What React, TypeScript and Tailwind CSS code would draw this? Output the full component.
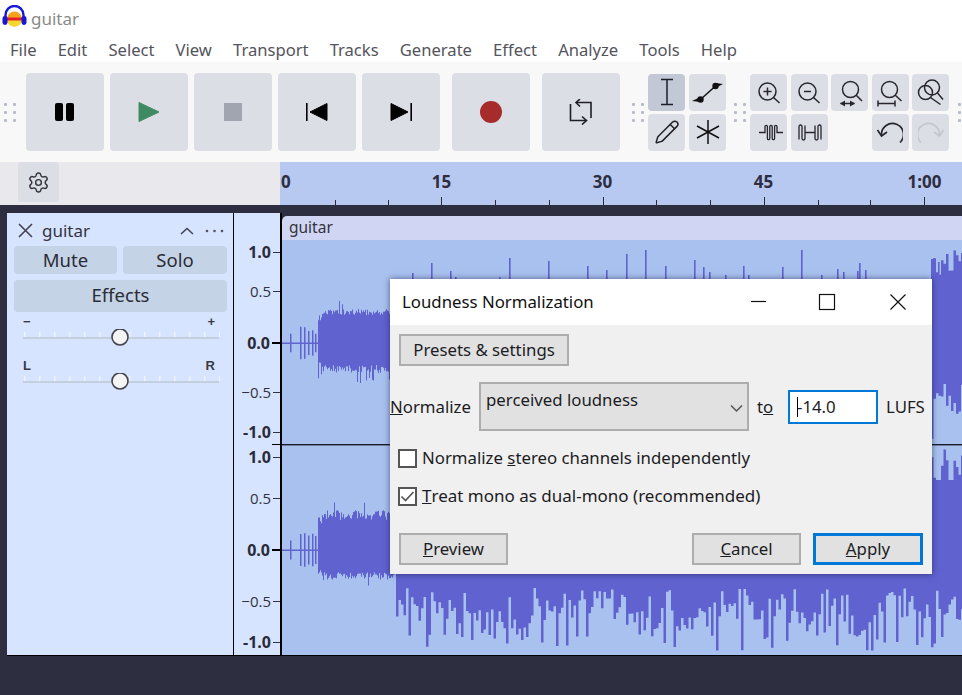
import { Pencil, Settings } from "lucide-react";

const ui = "font-['Noto_Sans',sans-serif]";

// spikes above the dialog, read off the reference: [x, top] in page pixels
const topSpikes = [
  [397, 282], [407, 282], [412, 273], [431, 263], [436, 286], [450, 271], [455, 277], [470, 285],
  [479, 293], [484, 288], [489, 285], [499, 277], [504, 288], [509, 258], [518, 288], [529, 285],
  [548, 261], [563, 286], [567, 280], [577, 284], [587, 266], [593, 290], [606, 270], [626, 254],
  [645, 250], [650, 280], [665, 266], [682, 290], [689, 284], [694, 260], [703, 267], [709, 272],
  [725, 275], [743, 266], [748, 275], [763, 285], [782, 267], [787, 288], [801, 250], [805, 290],
  [821, 275], [837, 269], [843, 272], [857, 271], [859, 263], [865, 270], [880, 290], [890, 290],
  [903, 287], [918, 292], [933, 258], [938, 262], [943, 270], [947, 266], [951, 275], [956, 260], [961, 270],
];

function rng(seed: number) {
  let s = seed;
  return () => {
    s = (s * 16807) % 2147483647;
    return s / 2147483647;
  };
}

function buildWave() {
  const cy = [103, 310];
  let d = "";
  cy.forEach((c, ch) => {
    const r = rng(ch === 0 ? 4211 : 9137);
    // quiet lead-in
    d += `M0 ${c - 0.5}h36v1.5h-36z`;
    for (const sx of [8, 18, 22, 26, 30, 33]) {
      const a = 9 + r() * 8;
      d += `M${sx} ${c - a}h1.5v${a * 2}h-1.5z`;
    }
    for (let x = 36; x < 114; x++) {
      const up = (ch === 0 ? 28 + r() * 6 : 30 + r() * 10) + (r() > 0.9 ? 8 : 0) - (x < 40 ? 6 : 0);
      const down = 22 + r() * 8 + (r() > 0.93 ? 13 : 0) - (x < 40 ? 4 : 0);
      d += `M${x} ${c - up}h1v${up + down}h-1z`;
    }
    for (let x = 114; x < 680; x += 2.5) {
      const swell = 9 * Math.sin(x / 27) + 5 * Math.sin(x / 9);
      const up = x > 648 ? 62 + r() * 34 : 58 + r() * 5;
      let down = 64 + swell + (r() - 0.5) * 26;
      const roll = r();
      if (roll > 0.82) down = 84 + r() * 17;
      else if (roll < 0.12) down = 38 + r() * 12;
      const u = ch === 1 ? Math.max(up + 6, 70) : up;
      d += `M${x} ${c - u}h2.5v${u + down}h-2.5z`;
    }
  });
  for (const [x, top] of topSpikes) {
    d += `M${x - 282} ${top - 240}h1.6v60h-1.6z`;
  }
  return d;
}

const waveD = buildWave();

function Grip({ className = "" }: { className?: string }) {
  return (
    <div className={`grid grid-cols-2 gap-x-[6px] gap-y-[5px] shrink-0 ${className}`}>
      {[0, 1, 2, 3, 4, 5].map((i) => (
        <span key={i} className="w-[3px] h-[3px] bg-[#b8bcca] rounded-[1px]" />
      ))}
    </div>
  );
}

function BigBtn({ children, className = "" }: { children: React.ReactNode; className?: string }) {
  return (
    <div className={`w-[78px] h-[78px] rounded-[4px] bg-[#dcdee6] flex items-center justify-center shrink-0 ${className}`}>
      {children}
    </div>
  );
}

function SmallBtn({ children, active }: { children?: React.ReactNode; active?: boolean }) {
  return (
    <div className={`w-[37px] h-[37px] rounded-[4px] flex items-center justify-center ${active ? "bg-[#c3c8d6]" : "bg-[#dcdee6]"}`}>
      {children}
    </div>
  );
}

function ZoomIcon({ children }: { children?: React.ReactNode }) {
  return (
    <svg width="28" height="30" viewBox="0 0 28 30" fill="none" stroke="#26262c" strokeWidth="1.5">
      {children}
    </svg>
  );
}

function Slider({ left, right }: { left: string; right: string }) {
  const ticks = [0, 1, 2, 3, 4, 5, 6, 7, 8, 9, 10, 11, 12, 13];
  return (
    <div className="h-[44px]">
      <div className="flex justify-between pl-[9px] pr-[12px] h-[14px] text-[13px] leading-[14px] font-bold font-['Liberation_Sans',sans-serif] text-[#3a3a44]">
        <span>{left}</span>
        <span>{right}</span>
      </div>
      <svg width="197" height="18" viewBox="0 0 197 18" className="ml-[9px]">
        {ticks.map((t) => (
          <rect key={t} x={1 + t * 15} y="3" width="1.5" height="5" fill="#eef3fc" />
        ))}
        <rect x="0" y="8" width="196" height="2" fill="#c3cfdf" />
        <circle cx="97" cy="8" r="8" fill="#f4f4f4" stroke="#44444c" strokeWidth="1.6" />
      </svg>
    </div>
  );
}

function ScaleRow({ label, strong, className = "", long }: { label: string; strong?: boolean; long?: boolean; className?: string }) {
  return (
    <div className={`h-[20px] flex items-center justify-end ${className}`}>
      <span className={`${strong ? "font-bold text-[#2b2b38] text-[16px]" : "text-[#33333d] text-[15px]"} font-['Open_Sans',sans-serif] leading-none`}>
        {label}
      </span>
      <span className={`ml-[2px] ${long ? "w-[8px] h-[2px] bg-black" : "w-[7px] h-px bg-[#33333d]"}`} />
    </div>
  );
}

function DlgBtn({ children, className = "" }: { children: React.ReactNode; className?: string }) {
  return (
    <div className={`h-[32px] bg-[#e1e1e1] flex items-center justify-center text-[16.8px] leading-none text-[#1c1c24] ${className}`}>
      {children}
    </div>
  );
}

function Dialog() {
  return (
    <div className={`absolute left-[390px] top-[279px] w-[542px] h-[295px] bg-[#f0f0f0] shadow-[0_0_6px_rgba(20,20,60,0.6)] text-[16.8px] ${ui}`}>
      <div className="h-[46px] bg-white flex items-center pl-[12px]">
        <span className="text-[#111] flex-1">Loudness Normalization</span>
        <svg width="155" height="18" viewBox="0 0 155 18" className="mr-[26px]" fill="none" stroke="#111" strokeWidth="1.2">
          <path d="M0 8.5H15" />
          <rect x="68.5" y="1.5" width="15" height="15" />
          <path d="M139.5 1.5L154.5 16.5M154.5 1.5L139.5 16.5" />
        </svg>
      </div>
      <div className="pl-[9px] pt-[9px]">
        <DlgBtn className="w-[170px] border-2 border-[#adadad]">Presets &amp; settings</DlgBtn>
      </div>
      <div className="flex items-start mt-[16px] h-[49px]">
        <span className="leading-[49px] text-[#1c1c24] w-[89px]">
          <span className="underline">N</span>ormalize
        </span>
        <div className="w-[270px] h-[49px] bg-[#e1e1e1] border-2 border-[#adadad] flex justify-between pl-[5px] pr-[2px]">
          <span className="leading-[32px] h-[32px] text-[#1c1c24]">perceived loudness</span>
          <svg width="18" height="45" viewBox="0 0 18 45" fill="none" stroke="#555" strokeWidth="1.5">
            <path d="M4 21.5L9.5 27L15 21.5" />
          </svg>
        </div>
        <span className="leading-[49px] text-[#1c1c24] ml-[8px] w-[32px]">
          t<span className="underline">o</span>
        </span>
        <div className="w-[90px] h-[34px] mt-[8px] -ml-px bg-white border-2 border-[#0078d7] flex items-center pl-[7px] text-[#1c1c24] leading-none">
          <span className="w-px h-[20px] bg-black -mr-px" />
          -14.0
        </div>
        <span className="leading-[49px] text-[#1c1c24] ml-[8px]">LUFS</span>
      </div>
      <div className="flex items-center pl-[8px] mt-[17px] h-[20px] text-[#1c1c24]">
        <span className="w-[19px] h-[19px] bg-white border-2 border-[#555] mr-[5px]" />
        Normalize&nbsp;<span className="underline">s</span>tereo channels independently
      </div>
      <div className="flex items-center pl-[8px] mt-[18px] h-[20px] text-[17px] text-[#1c1c24]">
        <span className="w-[19px] h-[19px] bg-white border-2 border-[#555] mr-[5px] flex items-center justify-center">
          <svg width="15" height="15" viewBox="0 0 15 15" fill="none" stroke="#555" strokeWidth="1.7">
            <path d="M1.5 7.5L5.5 11.5L13.5 3" />
          </svg>
        </span>
        <span className="underline">T</span>reat mono as dual-mono (recommended)
      </div>
      <div className="flex pl-[9px] pr-[9px] mt-[27px]">
        <DlgBtn className="w-[109px] border-2 border-[#adadad]">
          <span className="underline">P</span>review
        </DlgBtn>
        <DlgBtn className="w-[109px] ml-auto border-2 border-[#adadad]">
          <span className="underline">C</span>ancel
        </DlgBtn>
        <DlgBtn className="w-[110px] ml-[12px] border-[3px] border-[#0078d7]">
          <span className="underline">A</span>pply
        </DlgBtn>
      </div>
    </div>
  );
}

export default function App() {
  return (
    <div className={`relative w-[962px] h-[695px] overflow-hidden bg-white flex flex-col ${ui}`}>
      {/* Title bar */}
      <div className="h-[38px] flex items-center pl-[2px] shrink-0">
        <svg width="25" height="22" viewBox="0 0 25 22" className="mb-[6px]">
          <circle cx="12.5" cy="14" r="7.5" fill="#f6a21c" />
          <path d="M5 14a7.5 7.5 0 0 0 15 0z" fill="#f7d82a" />
          <rect x="5" y="12.5" width="15" height="3" fill="#e3202a" />
          <path d="M3.5 14V10a9 9 0 0 1 18 0v4" fill="none" stroke="#1717d6" strokeWidth="2.4" />
          <rect x="0.5" y="11" width="5" height="9" rx="2.4" fill="#1717d6" />
          <rect x="19.5" y="11" width="5" height="9" rx="2.4" fill="#1717d6" />
        </svg>
        <span className="ml-[4px] text-[17px] text-[#8a8a8a] leading-none mb-[1px]">guitar</span>
      </div>

      {/* Menu */}
      <div className="h-[24px] flex items-center pl-[10px] gap-[21.1px] text-[16.6px] text-[#54545c] shrink-0 leading-none">
        {["File", "Edit", "Select", "View", "Transport", "Tracks", "Generate", "Effect", "Analyze", "Tools", "Help"].map((m) => (
          <span key={m}>{m}</span>
        ))}
      </div>

      {/* Toolbar */}
      <div className="h-[100px] shrink-0 bg-[#f8f8f9] flex items-center pl-[4px] overflow-hidden">
        <Grip className="mr-[10px]" />
        <div className="flex gap-[6px] shrink-0">
          <BigBtn>
            <svg width="20" height="18" viewBox="0 0 20 18">
              <rect x="0" y="0" width="8" height="18" rx="2" fill="#000" />
              <rect x="11" y="0" width="8" height="18" rx="2" fill="#000" />
            </svg>
          </BigBtn>
          <BigBtn>
            <svg width="22" height="22" viewBox="0 0 22 22">
              <path d="M1 1.5L21 11L1 20.5z" fill="#3f8a63" stroke="#3f8a63" strokeLinejoin="round" />
            </svg>
          </BigBtn>
          <BigBtn>
            <div className="w-[18px] h-[18px] bg-[#a1a5b0]" />
          </BigBtn>
          <BigBtn>
            <svg width="22" height="18" viewBox="0 0 22 18">
              <rect x="0" y="0" width="1.6" height="18" fill="#000" />
              <path d="M4 9L21 0.5V17.5z" fill="#000" stroke="#000" strokeLinejoin="round" />
            </svg>
          </BigBtn>
          <BigBtn>
            <svg width="22" height="18" viewBox="0 0 22 18">
              <rect x="20.4" y="0" width="1.6" height="18" fill="#000" />
              <path d="M18 9L1 0.5V17.5z" fill="#000" stroke="#000" strokeLinejoin="round" />
            </svg>
          </BigBtn>
        </div>
        <BigBtn className="ml-[12px]">
          <div className="w-[22px] h-[22px] rounded-full bg-[#a62c2c]" />
        </BigBtn>
        <BigBtn className="ml-[12px]">
          <svg width="24" height="26" viewBox="0 0 24 26" fill="none" stroke="#1f1f26" strokeWidth="1.6">
            <path d="M1.5 5V21.5H17M22 19V3.5H7" />
            <path d="M13 17.5L17.5 21.5L13 25.5M11 0L7 3.5L11 7.5" />
          </svg>
        </BigBtn>

        <Grip className="ml-[12px] mr-[4px]" />
        <div className="grid grid-cols-[37px_37px] gap-x-[4px] gap-y-[3px] shrink-0">
          <SmallBtn active>
            <svg width="16" height="28" viewBox="0 0 16 28" fill="none" stroke="#1e1e24" strokeWidth="1.5">
              <path d="M2 1.5H14M2 26.5H14M8 1.5V26.5" />
            </svg>
          </SmallBtn>
          <SmallBtn>
            <svg width="34" height="26" viewBox="0 0 34 26" fill="#111">
              <path d="M9.5 20.5L24.5 7" fill="none" stroke="#111" strokeWidth="1.5" />
              <circle cx="9.5" cy="20.5" r="3.2" />
              <circle cx="24.5" cy="7" r="3.2" />
              <path d="M1 22L9.5 18V23zM32 5L24.5 4V9z" />
            </svg>
          </SmallBtn>
          <SmallBtn>
            <Pencil size={26} strokeWidth={1.4} color="#222228" />
          </SmallBtn>
          <SmallBtn>
            <svg width="26" height="26" viewBox="0 0 26 26" stroke="#111" strokeWidth="1.5">
              <path d="M13 1V25M2 7L24 19M2 19L24 7" />
            </svg>
          </SmallBtn>
        </div>

        <Grip className="ml-[8px] mr-[4px]" />
        <div className="grid grid-cols-[37px_37px_37px_37px_37px] gap-x-[3.5px] gap-y-[3px] shrink-0">
          <SmallBtn>
            <ZoomIcon>
              <circle cx="12.5" cy="14.5" r="8.5" />
              <path d="M18.5 20.5L24.5 26M8.5 14.5H16.5M12.5 10.5V18.5" />
            </ZoomIcon>
          </SmallBtn>
          <SmallBtn>
            <ZoomIcon>
              <circle cx="12.5" cy="14.5" r="8.5" />
              <path d="M18.5 20.5L24.5 26M9 14.5H16" />
            </ZoomIcon>
          </SmallBtn>
          <SmallBtn>
            <ZoomIcon>
              <circle cx="14.5" cy="12.5" r="8" />
              <path d="M20 18L26 24M4.5 26.5H18.5" />
              <path d="M4 26.5L9 23.5V29.5zM19 26.5L14 23.5V29.5z" fill="#26262c" stroke="none" />
            </ZoomIcon>
          </SmallBtn>
          <SmallBtn>
            <ZoomIcon>
              <circle cx="13.5" cy="12.5" r="8" />
              <path d="M19 18L25.5 24M2 26.5H19M2 23.5V29.5M19 23.5V29.5" />
            </ZoomIcon>
          </SmallBtn>
          <SmallBtn>
            <ZoomIcon>
              <circle cx="15" cy="10.5" r="7.5" />
              <circle cx="8.5" cy="15.5" r="7" />
              <path d="M20.5 16L26 22.5M13.5 20.5L23.5 27.5" />
            </ZoomIcon>
          </SmallBtn>
          <SmallBtn>
            <svg width="24" height="17" viewBox="0 0 24 17" fill="none" stroke="#26262c" strokeWidth="1.3" className="ml-[4px]">
              <path d="M0 8.5H6V2.5a1.2 1.2 0 0 1 2.4 0V14.5a1.2 1.2 0 0 0 2.4 0V2.5a1.2 1.2 0 0 1 2.4 0V14.5a1.2 1.2 0 0 0 2.4 0V2.5a1.2 1.2 0 0 1 2.4 0V8.5H24" />
            </svg>
          </SmallBtn>
          <SmallBtn>
            <svg width="24" height="17" viewBox="0 0 24 17" fill="none" stroke="#26262c" strokeWidth="1.3" className="ml-[2px]">
              <path d="M1 15.5V2.5a1.5 1.5 0 0 1 3 0V14.5a1.5 1.5 0 0 0 3 0V1.5M7 8.5H17M17 1.5V14.5a1.5 1.5 0 0 0 3 0V2.5a1.5 1.5 0 0 1 3 0V15.5" />
            </svg>
          </SmallBtn>
          <div />
          <SmallBtn>
            <svg width="26" height="26" viewBox="0 0 26 26" fill="none" stroke="#26262c" strokeWidth="1.7">
              <path d="M4.5 16A11 11 0 1 1 23 23.5" />
              <path d="M0.5 11L4.5 17L10 13" />
            </svg>
          </SmallBtn>
          <SmallBtn>
            <svg width="26" height="26" viewBox="0 0 26 26" fill="none" stroke="#c3c6ce" strokeWidth="1.7">
              <path d="M21.5 16A11 11 0 1 0 3 23.5" />
              <path d="M25.5 11L21.5 17L16 13" />
            </svg>
          </SmallBtn>
        </div>
        <Grip className="ml-[9px]" />
      </div>

      {/* Timeline ruler */}
      <div className="h-[43px] shrink-0 flex">
        <div className="w-[280px] bg-[#e9e9ed] pl-[18px] shrink-0">
          <div className="w-[41px] h-[40px] rounded-[4px] bg-[#dcdee6] flex items-center justify-center">
            <Settings size={23} strokeWidth={1.5} color="#34343c" />
          </div>
        </div>
        <div className="relative flex-1 bg-[#b7c9f0] overflow-hidden">
          <div className="flex h-[38px] items-center text-[17px] font-bold text-[#2e2e40] font-['Open_Sans',sans-serif] leading-none">
            <span className="w-[81px] shrink-0 pl-px">0</span>
            {["15", "30", "45", "1:00"].map((l) => (
              <span key={l} className="w-[161px] shrink-0 text-center">{l}</span>
            ))}
          </div>
          <svg className="absolute left-0 bottom-0" width="682" height="8" viewBox="0 0 682 8" fill="#2a2a38">
            {[55, 108, 215, 269, 376, 430, 538, 590].map((x) => (
              <rect key={x} x={x} y="3" width="1" height="5" />
            ))}
            {[161, 323, 484, 644].map((x) => (
              <rect key={x} x={x} y="0" width="1" height="8" />
            ))}
          </svg>
        </div>
      </div>

      {/* Tracks */}
      <div className="flex-1 bg-[#2d2f40] pt-[8px] pl-[7px]">
        <div className="h-[443px] flex border-b border-black">
          <div className="w-[227px] bg-[#d6e4ff] border-r border-black shrink-0 pl-[7px] pr-[6px] pt-[7px]">
            <div className="h-[21px] flex items-center text-[#33333d]">
              <svg width="15" height="15" viewBox="0 0 15 15" fill="none" stroke="#44444e" strokeWidth="1.6" className="ml-[4px]">
                <path d="M1 1L14 14M14 1L1 14" />
              </svg>
              <span className="ml-[9px] text-[17px] leading-none flex-1">guitar</span>
              <svg width="14" height="8" viewBox="0 0 14 8" fill="none" stroke="#44444e" strokeWidth="1.6" className="mr-[11px]">
                <path d="M1 7L7 1.5L13 7" />
              </svg>
              <svg width="19" height="4" viewBox="0 0 19 4" fill="#55555f" className="mr-[3px]">
                <circle cx="2" cy="2" r="1.3" />
                <circle cx="9.5" cy="2" r="1.3" />
                <circle cx="17" cy="2" r="1.3" />
              </svg>
            </div>
            <div className="flex gap-[6px] mt-[5px] text-[18.5px] text-[#2c2c36] leading-none">
              <div className="w-[103px] h-[28px] rounded-[4px] bg-[#c4d3e6] flex items-center justify-center">Mute</div>
              <div className="w-[104px] h-[28px] rounded-[4px] bg-[#c4d3e6] flex items-center justify-center">Solo</div>
            </div>
            <div className="w-[213px] h-[32px] mt-[6px] pb-[2px] rounded-[4px] bg-[#c4d3e6] flex items-center justify-center text-[18.5px] text-[#2c2c36] leading-none">
              Effects
            </div>
            <div className="mt-[3px]">
              <Slider left="−" right="+" />
              <Slider left="L" right="R" />
            </div>
          </div>
          <div className="w-[46px] shrink-0 bg-[#d6e4ff] pt-[29px]">
            <ScaleRow label="1.0" strong />
            <ScaleRow label="0.5" className="mt-[19px]" />
            <ScaleRow label="0.0" strong long className="mt-[32px]" />
            <ScaleRow label="−0.5" className="mt-[29px]" />
            <ScaleRow label="-1.0" strong className="mt-[20px]" />
            <div className="h-px w-[8px] bg-black ml-auto mt-[2px]" />
            <ScaleRow label="1.0" strong className="mt-[2px]" />
            <ScaleRow label="0.5" className="mt-[21px]" />
            <ScaleRow label="0.0" strong long className="mt-[32px]" />
            <ScaleRow label="−0.5" className="mt-[31px]" />
            <ScaleRow label="-1.0" strong className="mt-[21px]" />
          </div>
          <div className="w-[2px] bg-black shrink-0" />
          <div className="flex-1 flex flex-col pt-[3px] overflow-hidden">
            <div className="h-[24px] shrink-0 bg-[#d0d5f3] rounded-tl-[5px] pl-[7px] text-[15.5px] leading-[23px] text-[#33333d]">
              guitar
            </div>
            <svg width="680" height="415" viewBox="0 0 680 415" className="bg-[#a9c1ef] shrink-0 block">
              <path d={waveD} fill="#5f62cf" />
              <rect x="0" y="204" width="680" height="1.4" fill="#1b1b26" />
            </svg>
          </div>
        </div>
      </div>

      <Dialog />
    </div>
  );
}
